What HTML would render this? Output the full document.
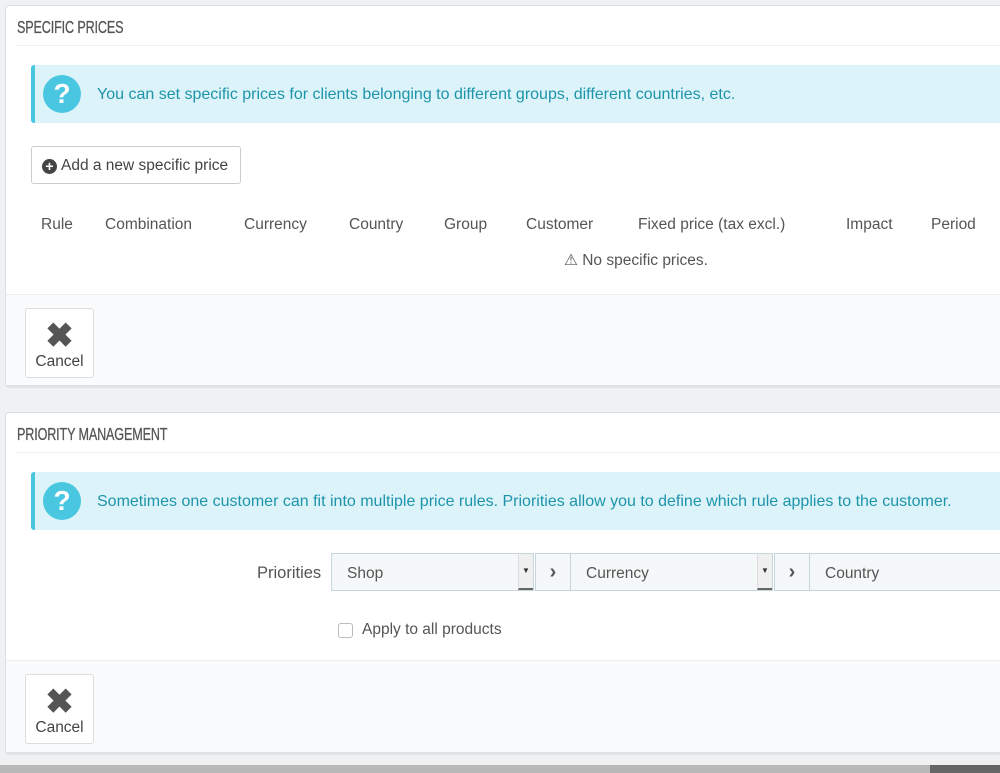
<!DOCTYPE html>
<html><head><style>
body{margin:0;width:1000px;height:773px;background:#eff1f2;font-family:"Liberation Sans",sans-serif;overflow:hidden;position:relative;color:#555}
.panel{position:absolute;left:5px;width:1010px;background:#fff;border:1px solid #dcdfe2;border-radius:4px;box-shadow:0 2px 0 rgba(0,0,0,.05)}
.hd{height:39px;border-bottom:1px solid #eee;margin:0 10px;font-size:17.5px;color:#555;line-height:42px;padding-left:1px}
.hd span{display:inline-block;transform:scaleX(0.72);transform-origin:0 0;letter-spacing:-0.2px;-webkit-text-stroke:0.3px #555}
.info{position:absolute;left:31px;width:990px;height:58px;background:#dcf4f9;border-left:4px solid #4ac7e0;border-radius:3px;color:#1e94ab;font-size:16px}
.info .q{position:absolute;left:8px;top:10px;width:38px;height:38px;border-radius:50%;background:#4ac7e0;color:#fff;font-weight:bold;font-size:28px;text-align:center;line-height:38px}
.info span{position:absolute;left:62px;top:21px;white-space:nowrap}
.ft{position:absolute;left:0;right:0;bottom:0;background:#fafbfc;border-top:1px solid #eee}
.cancel{position:absolute;left:19px;top:13px;width:67px;height:68px;border:1px solid #ddd;border-radius:3px;background:#fff;text-align:center;font-size:15.5px;color:#444}
.cancel .x{font-size:34px;font-weight:bold;line-height:34px;margin-top:10px;color:#555;margin-bottom:0}
.th{position:absolute;top:216px;font-size:15.5px;color:#555;white-space:nowrap}
.sel{position:absolute;top:553px;height:36px;background:#f5f8f9;border:1px solid #c7d6db;font-size:15.5px;color:#555;line-height:40px}
.sel i{position:absolute;right:0;top:0;width:14px;height:34px;border-left:1px solid #ddd;border-bottom:2px solid #666;background:#f0f0f0;font-style:normal;font-size:8px;text-align:center;line-height:34px;color:#333}
.arr{position:absolute;top:553px;width:34px;height:36px;background:#f5f8f9;border:1px solid #c7d6db;text-align:center;line-height:36px;font-size:20px;font-weight:bold;color:#555}
</style></head><body>
<div class="panel" style="top:5px;height:379px">
<div class="hd"><span>SPECIFIC PRICES</span></div>
<div class="ft" style="height:90px"><div class="cancel"><div class="x">✖</div>Cancel</div></div>
</div>
<div class="info" style="top:65px"><div class="q">?</div><span>You can set specific prices for clients belonging to different groups, different countries, etc.</span></div>
<div style="position:absolute;left:31px;top:146px;width:208px;height:36px;border:1px solid #ccc;border-radius:3px;background:#fff;font-size:15.5px;color:#444;line-height:38px;white-space:nowrap"><span style="display:inline-block;width:15px;height:15px;border-radius:50%;background:#444;color:#fff;font-size:14px;line-height:15px;text-align:center;font-weight:bold;margin:0 4px 0 10px;vertical-align:-1px">+</span>Add a new specific price</div>
<div class="th" style="left:41px">Rule</div>
<div class="th" style="left:105px">Combination</div>
<div class="th" style="left:244px">Currency</div>
<div class="th" style="left:349px">Country</div>
<div class="th" style="left:444px">Group</div>
<div class="th" style="left:526px">Customer</div>
<div class="th" style="left:638px">Fixed price (tax excl.)</div>
<div class="th" style="left:846px">Impact</div>
<div class="th" style="left:931px">Period</div>
<div class="th" style="left:564px;top:251px">⚠ No specific prices.</div>

<div class="panel" style="top:412px;height:339px">
<div class="hd"><span>PRIORITY MANAGEMENT</span></div>
<div class="ft" style="height:91px"><div class="cancel"><div class="x">✖</div>Cancel</div></div>
</div>
<div class="info" style="top:472px"><div class="q">?</div><span>Sometimes one customer can fit into multiple price rules. Priorities allow you to define which rule applies to the customer.</span></div>
<div style="position:absolute;left:257px;top:564px;font-size:16.5px;color:#555">Priorities</div>
<div class="sel" style="left:331px;width:201px"><span style="margin-left:15px">Shop</span><i>▼</i></div>
<div class="arr" style="left:535px">›</div>
<div class="sel" style="left:570px;width:201px"><span style="margin-left:15px">Currency</span><i>▼</i></div>
<div class="arr" style="left:774px">›</div>
<div class="sel" style="left:809px;width:220px"><span style="margin-left:15px">Country</span></div>
<div style="position:absolute;left:338px;top:623px;width:13px;height:13px;border:1px solid #bbb;border-radius:3px;background:#fff"></div>
<div style="position:absolute;left:362px;top:621px;font-size:15.5px;color:#555">Apply to all products</div>
<div style="position:absolute;left:0;top:765px;width:930px;height:8px;background:#b9b9b9"></div>
<div style="position:absolute;left:930px;top:765px;width:70px;height:8px;background:#666"></div>
</body></html>
